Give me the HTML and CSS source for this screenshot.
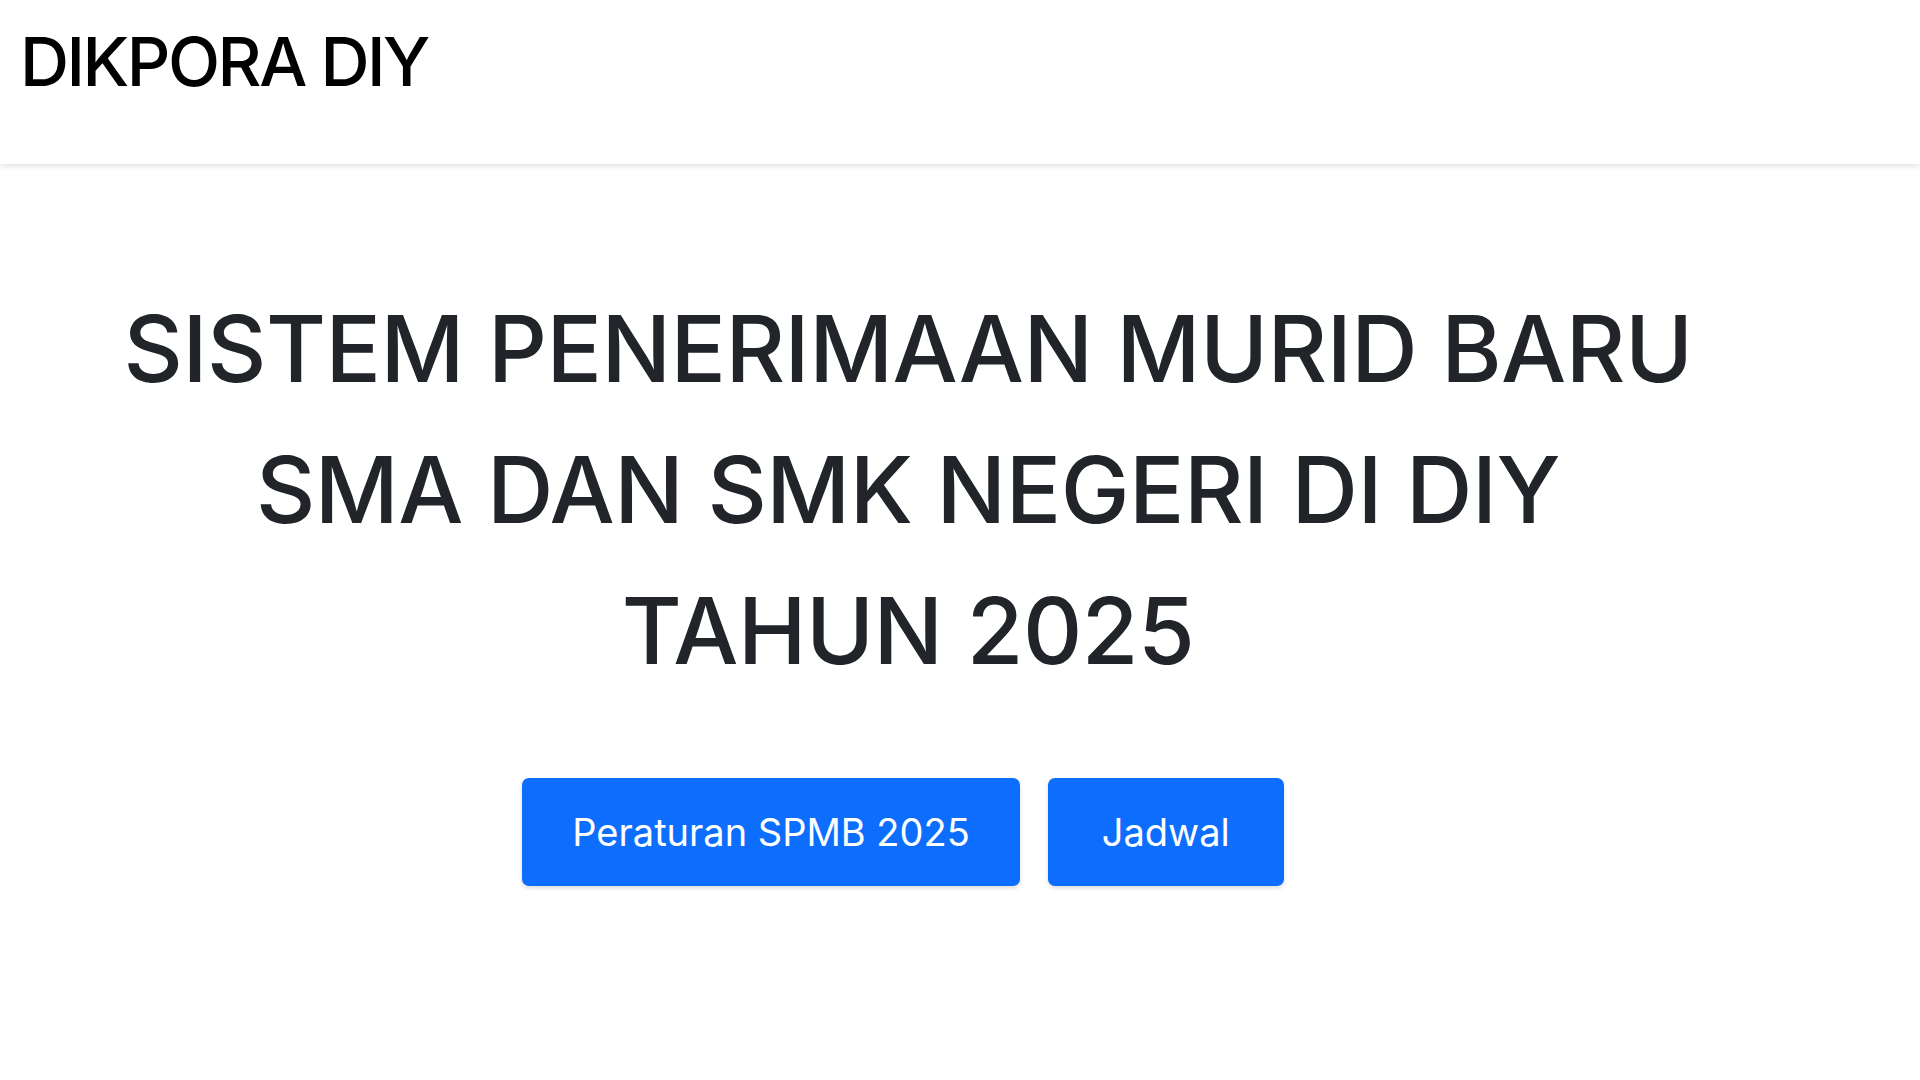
FILE: index.html
```html
<!DOCTYPE html>
<html lang="id">
<head>
    <meta charset="UTF-8">
    <meta name="viewport" content="width=device-width, initial-scale=1.0">
    <title>SPMB DIY 2025</title>
    <link rel="stylesheet" href="styles.css">
</head>
<body>
    <nav class="navbar">
        <a class="brand" href="#">DIKPORA DIY</a>
    </nav>

    <section class="hero">
        <div class="hero-inner">
            <h1 class="hero-title">SISTEM PENERIMAAN MURID BARU<br>SMA DAN SMK NEGERI DI DIY<br>TAHUN 2025</h1>
            <div class="hero-actions">
                <a class="btn" href="#">Peraturan SPMB 2025</a>
                <a class="btn btn-narrow" href="#">Jadwal</a>
            </div>
        </div>
    </section>
</body>
</html>
```

FILE: styles.css
```css
* {
    box-sizing: border-box;
}

body {
    margin: 0;
    font-family: Inter, "Noto Sans", sans-serif;
    background-color: #fff;
    color: #212529;
    min-height: 100vh;
}

.navbar {
    height: 164px;
    display: flex;
    align-items: flex-start;
    padding: 20px 20px 0;
    background-color: #fff;
    box-shadow: 0 2px 6px rgba(0, 0, 0, 0.12);
}

.brand {
    color: #000;
    text-decoration: none;
    font-size: 68px;
    font-weight: 500;
    letter-spacing: -2.5px;
}

.hero {
    padding: 114px 120px 0 16px;
}

.hero-inner {
    text-align: center;
}

.hero-title {
    margin: 0 0 77px;
    font-size: 92px;
    font-weight: 500;
    line-height: 141px;
    letter-spacing: -0.5px;
}

.hero-actions {
    display: flex;
    justify-content: center;
    gap: 28px;
    padding-right: 10px;
}

.btn {
    display: inline-flex;
    align-items: center;
    height: 108px;
    padding: 0 50px;
    background-color: #0d6efd;
    color: #fff;
    text-decoration: none;
    font-size: 38px;
    border-radius: 7px;
    box-shadow: 0 2px 4px rgba(0, 0, 0, 0.15);
}

.btn-narrow {
    padding: 0 54px;
}
```
